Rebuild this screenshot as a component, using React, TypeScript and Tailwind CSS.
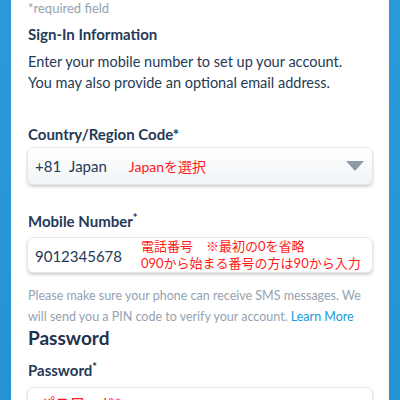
import React from 'react';

const font = { fontFamily: 'Lato, "Noto Sans CJK JP", sans-serif' };

export default function App() {
  return (
    <div
      className="w-[400px] h-[400px] overflow-hidden bg-gradient-to-b from-[#2c9ad9] to-[#2393d6] px-[11px]"
      style={font}
    >
      <div className="bg-white h-full pl-[17px] pr-[16px] text-[#253a55]">
        <p className="text-[13px] leading-[17px] text-[#95a2b1]">*required field</p>

        <h3 className="mt-[7px] text-[15px] leading-[20px] font-bold">Sign-In Information</h3>

        <p className="mt-[7px] text-[14.5px] leading-[21px]">
          Enter your mobile number to set up your account.
          <br />
          You may also provide an optional email address.
        </p>

        {/* Country */}
        <label className="block mt-[31px] text-[15px] leading-[20px] font-bold">Country/Region Code*</label>
        <div className="mt-[3px] -ml-[1px] h-[38px] rounded-[6px] border border-[#e3e8ee] bg-gradient-to-b from-white to-[#f1f4f8] shadow-[0_2px_3px_rgba(0,0,0,0.18)] flex items-center pl-[7px] pr-[8px]">
          <span className="text-[15px] text-[#253a55]">+81</span>
          <span className="ml-[8px] text-[15px] text-[#253a55]">Japan</span>
          <span className="ml-[22px] text-[14px] text-[#ff1a1a]">Japanを選択</span>
          <svg className="ml-auto" width="18" height="10" viewBox="0 0 18 10">
            <path d="M0 0 H18 L9 10 Z" fill="#8d9aa9" />
          </svg>
        </div>

        {/* Mobile */}
        <label className="block mt-[26px] text-[15px] leading-[20px] font-bold">
          Mobile Number<sup className="text-[11px] -top-[5px]">*</sup>
        </label>
        <div className="mt-[6px] -ml-[1px] h-[36px] rounded-[6px] border border-[#e3e8ee] bg-white shadow-[0_2px_3px_rgba(0,0,0,0.18)] flex items-center pl-[7px]">
          <span className="text-[15px] text-[#253a55] mt-[3px]">9012345678</span>
          <div className="ml-[19px] text-[13px] leading-[17px] text-[#ff1a1a]">
            <div>電話番号　※最初の0を省略</div>
            <div>090から始まる番号の方は90から入力</div>
          </div>
        </div>

        <p className="mt-[12px] text-[12.5px] leading-[21px] text-[#95a2b1]">
          Please make sure your phone can receive SMS messages. We will send you a PIN code to verify your account.{' '}
          <span className="text-[#1a9ad8]">Learn More</span>
        </p>

        <h2 className="mt-[0px] text-[19px] leading-[22px] font-bold text-[#1f324d]">Password</h2>

        <label className="block mt-[11px] text-[15px] leading-[20px] font-bold">
          Password<sup className="text-[11px] -top-[5px]">*</sup>
        </label>
        <div className="mt-[7px] -ml-[1px] h-[36px] rounded-[6px] border border-[#e3e8ee] bg-white shadow-[0_2px_3px_rgba(0,0,0,0.18)] flex items-start pl-[12px] pt-[4px]">
          <span className="text-[15px] text-[#ff1a1a]">パスワード*</span>
        </div>
      </div>
    </div>
  );
}
